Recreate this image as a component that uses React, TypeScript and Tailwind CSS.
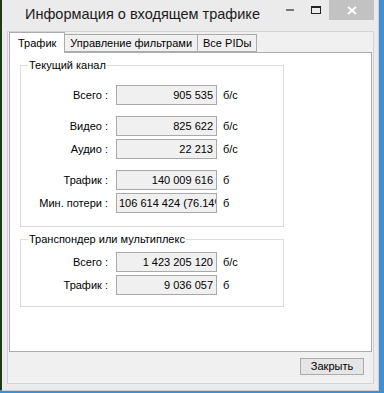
import React from 'react';

type Row = { label: string; value: string; unit: string; gap?: boolean };

const channelRows: Row[] = [
  { label: 'Всего :', value: '905 535', unit: 'б/с' },
  { label: 'Видео :', value: '825 622', unit: 'б/с', gap: true },
  { label: 'Аудио :', value: '22 213', unit: 'б/с' },
  { label: 'Трафик :', value: '140 009 616', unit: 'б', gap: true },
  { label: 'Мин. потери :', value: '106 614 424 (76.14%)', unit: 'б' },
];

const muxRows: Row[] = [
  { label: 'Всего :', value: '1 423 205 120', unit: 'б/с' },
  { label: 'Трафик :', value: '9 036 057', unit: 'б' },
];

const Field: React.FC<{ row: Row }> = ({ row }) => {
  // long values get cut on the right, like the WinForms textbox does
  const overflow = row.value.length > 14;
  return (
    <div className={`flex items-center h-[20px] ${row.gap ? 'mt-[11px]' : 'mt-[3px]'}`}>
      <span className="w-[95px] text-right pr-[8px] whitespace-nowrap">{row.label}</span>
      <div className="w-[101px] h-[20px] border border-[#a9a9a9] bg-[#f0f0f0] overflow-hidden flex items-center">
        <span className={`w-full whitespace-nowrap ${overflow ? 'text-left pl-[2px]' : 'text-right pr-[3px]'}`}>
          {row.value}
        </span>
      </div>
      <span className="ml-[6px]">{row.unit}</span>
    </div>
  );
};

const Group: React.FC<{ title: string; rows: Row[]; className: string }> = ({ title, rows, className }) => (
  <div className={`relative border border-[#dcdcdc] ${className}`}>
    <span className="absolute -top-[8px] left-[7px] bg-white px-[1px] leading-[14px] whitespace-nowrap">{title}</span>
    {rows.map((r, i) => (
      <Field key={i} row={r} />
    ))}
  </div>
);

export default function App() {
  return (
    <div
      className="w-[384px] h-[393px] flex bg-[#3d8fd8] overflow-hidden text-[11px] text-[#000]"
      style={{ fontFamily: '"Liberation Sans", Arial, sans-serif' }}
    >
      <div className="w-[2px] h-[390px] bg-[#1a3a1a]" />
      <div className="w-[377px] h-[391px] bg-[#ebebeb] border-r border-b border-[#cfcfcf] flex flex-col">
        {/* Title bar */}
        <div className="h-[31px] flex items-start">
          <span className="ml-[23px] mt-[4px] text-[14.5px] leading-[20px] text-[#1a1a1a] whitespace-nowrap">
            Информация о входящем трафике
          </span>
          <div className="ml-auto flex items-start">
            <div className="w-[26px] h-[20px] flex items-center justify-center">
              <div className="w-[8px] h-[2px] bg-[#777]" />
            </div>
            <div className="w-[26px] h-[20px] flex items-center justify-center">
              <div className="w-[10px] h-[8px] border border-[#222] border-t-2" />
            </div>
            <div className="w-[45px] h-[20px] bg-[#c2c2c2] flex items-center justify-center mr-[4px]">
              <svg width="10" height="9" viewBox="0 0 10 9">
                <path d="M1 1 L9 8 M9 1 L1 8" stroke="#fff" strokeWidth="2" />
              </svg>
            </div>
          </div>
        </div>

        {/* Client area */}
        <div className="ml-[5px] mr-[4px] h-[353px] bg-[#f0f0f0] border border-[#d2d2d2] flex flex-col">
          {/* Tabs */}
          <div className="flex items-end h-[20px] pl-[1px]">
            <div className="h-[21px] px-[8px] bg-white border border-b-0 border-[#acacac] flex items-center relative top-[1px] z-10">
              Трафик
            </div>
            <div className="h-[18px] px-[5px] bg-[#f0f0f0] border border-l-0 border-[#acacac] flex items-center">
              Управление фильтрами
            </div>
            <div className="h-[18px] px-[5px] bg-[#f0f0f0] border border-l-0 border-[#acacac] flex items-center">
              Все PIDы
            </div>
          </div>
          <div className="ml-[1px] w-[363px] h-[300px] bg-white border border-[#acacac] pt-[12px] pl-[10px]">
            <Group title="Текущий канал" rows={channelRows} className="w-[264px] h-[162px] pt-[16px]" />
            <Group title="Транспондер или мультиплекс" rows={muxRows} className="w-[264px] h-[68px] mt-[12px] pt-[9px]" />
          </div>
          <div className="flex justify-end mt-[6px] mr-[9px]">
            <button className="w-[64px] h-[17px] border border-[#acacac] bg-[#e5e5e5] leading-[15px]">
              Закрыть
            </button>
          </div>
        </div>
      </div>
    </div>
  );
}
